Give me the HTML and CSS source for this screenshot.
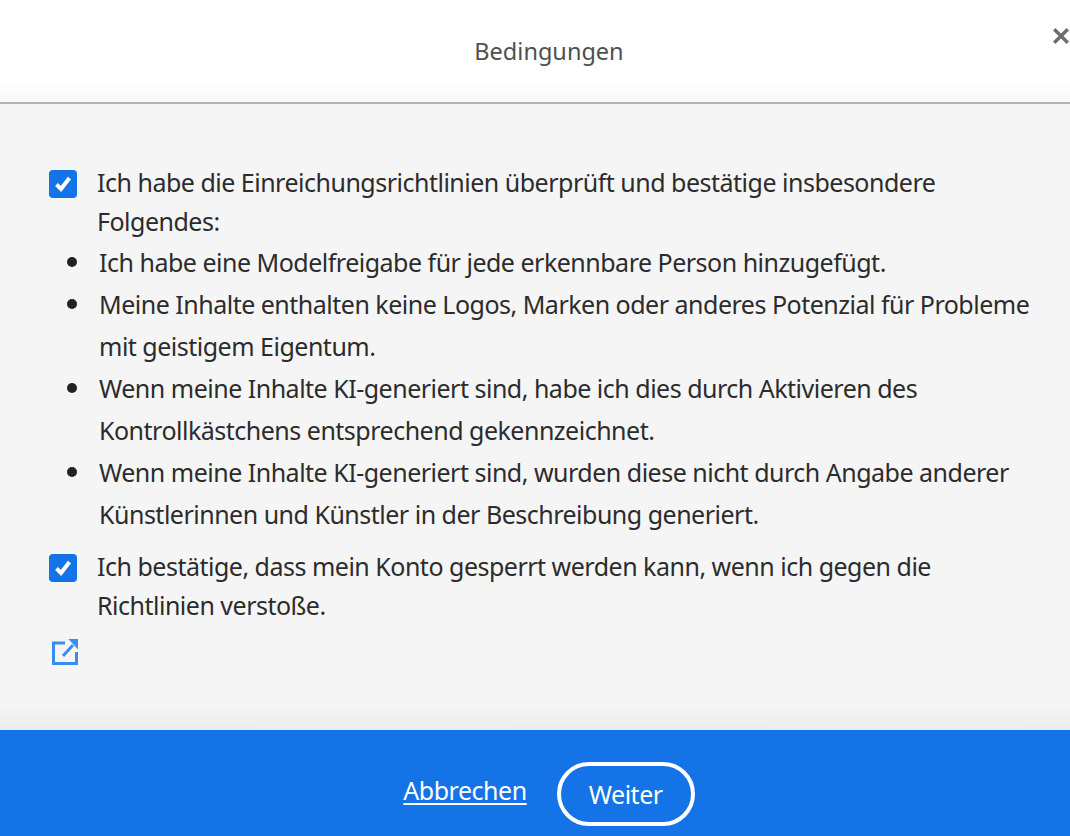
FILE: index.html
```html
<!DOCTYPE html>
<html lang="de">
<head>
<meta charset="utf-8">
<title>Bedingungen</title>
<link rel="stylesheet" href="styles.css">
</head>
<body>
<div class="dialog">
  <header class="head">
    <h1 class="title">Bedingungen</h1>
    <button class="close" aria-label="Schließen">
      <svg width="16" height="16" viewBox="0 0 16 16"><path d="M1.200 1.200l13.600 13.600M14.800 1.200L1.200 14.800" fill="none" stroke="#6e6e6e" stroke-width="3.400"/></svg>
    </button>
  </header>
  <main class="content">
    <div class="check-row">
      <span class="box"><svg width="28" height="28" viewBox="0 0 28 28"><path d="M7.500 14.500l4.500 4.500 8.500-11" fill="none" stroke="#fff" stroke-width="4"/></svg></span>
      <p class="check-text">Ich habe die Einreichungsrichtlinien überprüft und bestätige insbesondere Folgendes:</p>
    </div>
    <ul class="rules">
      <li>Ich habe eine Modelfreigabe für jede erkennbare Person hinzugefügt.</li>
      <li>Meine Inhalte enthalten keine Logos, Marken oder anderes Potenzial für Probleme mit geistigem Eigentum.</li>
      <li>Wenn meine Inhalte KI-generiert sind, habe ich dies durch Aktivieren des Kontrollkästchens entsprechend gekennzeichnet.</li>
      <li>Wenn meine Inhalte KI-generiert sind, wurden diese nicht durch Angabe anderer Künstlerinnen und Künstler in der Beschreibung generiert.</li>
    </ul>
    <div class="check-row second">
      <span class="box"><svg width="28" height="28" viewBox="0 0 28 28"><path d="M7.500 14.500l4.500 4.500 8.500-11" fill="none" stroke="#fff" stroke-width="4"/></svg></span>
      <p class="check-text">Ich bestätige, dass mein Konto gesperrt werden kann, wenn ich gegen die Richtlinien verstoße.</p>
    </div>
    <a class="ext" href="#" aria-label="Richtlinien öffnen">
      <svg width="28" height="28" viewBox="0 0 28 28"><path d="M14 6H2.500v20.500h23V15" fill="none" stroke="#378ef0" stroke-width="3"/><path d="M12 19L22 8" fill="none" stroke="#378ef0" stroke-width="3"/><path d="M17.500 2H27v10.500z" fill="#378ef0"/></svg>
    </a>
  </main>
  <footer class="foot">
    <a class="cancel" href="#">Abbrechen</a>
    <button class="next">Weiter</button>
  </footer>
</div>
</body>
</html>
```
FILE: styles.css
```css
* { box-sizing: border-box; }
html, body { margin: 0; padding: 0; }
body { width: 1070px; height: 836px; overflow: hidden; font-family: "Noto Sans", "Liberation Sans", sans-serif; color: #2c2c2c; }
.dialog { display: flex; flex-direction: column; height: 836px; background: #f5f5f5; }
.head { position: relative; height: 104px; flex: none; display: flex; align-items: center; justify-content: center; padding: 0 0 0 28px; background: linear-gradient(#fff 0, #fff 80px, #f8f8f8 102px); border-bottom: 2px solid #b3b3b3; }
.title { margin: 0; font-size: 23.5px; font-weight: 400; color: #505050; }
.close { position: absolute; top: 28px; right: 1px; width: 16px; height: 16px; padding: 0; border: 0; background: none; display: flex; }
.content { flex: 1; padding: 60px 36px 0 49px; background: linear-gradient(#f5f5f5 0, #f5f5f5 600px, #ececec 626px); }
.check-row { display: flex; align-items: flex-start; gap: 20px; }
.check-row.second { margin-top: 13px; }
.box { flex: none; width: 28px; height: 28px; margin-top: 6px; background: #1473e6; border-radius: 4px; display: flex; }
.check-text { margin: -1px 0 1px; font-size: 25px; line-height: 39px; letter-spacing: -0.5px; }
.rules { margin: -1px 0 0; padding: 0 0 0 18px; list-style: none; font-size: 25px; line-height: 42px; letter-spacing: -0.5px; }
.rules li { display: flex; align-items: flex-start; gap: 22px; }
.rules li::before { content: ""; flex: none; width: 10px; height: 10px; margin-top: 16px; border-radius: 50%; background: #222; }
.ext { display: block; width: 28px; height: 28px; margin: 11px 0 0 2px; }
.foot { flex: none; height: 106px; background: #1473e6; display: flex; justify-content: center; align-items: center; gap: 30px; padding: 24px 0 0 28px; color: #fff; }
.cancel { color: #fff; font-size: 25px; letter-spacing: -0.47px; text-decoration: underline; text-underline-offset: 3px; margin-top: -10px; }
.next { width: 138px; height: 64px; border: 4px solid #fff; border-radius: 32px; background: none; color: #fff; font: inherit; font-size: 25px; letter-spacing: -0.47px; margin-top: -2px; }
```
